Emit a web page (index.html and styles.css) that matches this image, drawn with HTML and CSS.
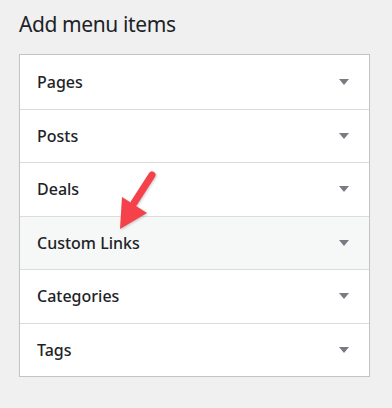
FILE: index.html
```html
<!doctype html>
<html lang="en">
<head>
  <meta charset="utf-8">
  <title>Add menu items</title>
  <meta name="viewport" content="width=device-width, initial-scale=1">
  <link rel="stylesheet" href="styles.css">
</head>
<body>
  <div id="menu-items">
    <h2 class="title">Add menu items</h2>
    <ul class="accordion">
      <li class="section"><span>Pages</span><i class="toggle"></i></li>
      <li class="section"><span>Posts</span><i class="toggle"></i></li>
      <li class="section"><span>Deals</span><i class="toggle"></i></li>
      <li class="section section-hover"><span>Custom Links</span><i class="toggle"></i></li>
      <li class="section"><span>Categories</span><i class="toggle"></i></li>
      <li class="section"><span>Tags</span><i class="toggle"></i></li>
    </ul>
    <svg class="pointer" width="60" height="70" viewBox="0 0 60 70">
      <line x1="52" y1="15" x2="34" y2="43" stroke="#f5424a" stroke-width="7" stroke-linecap="round"/>
      <polygon points="20,69 22,37 47,53" fill="#f5424a"/>
    </svg>
  </div>
</body>
</html>
```

FILE: styles.css
```css
html,
body {
  background: #f0f0f0;
  margin: 0;
  padding: 0;
  font-family: "Noto Sans", "Open Sans", sans-serif;
  color: #1d2327;
}

#menu-items {
  position: relative;
  padding: 11px 22px 0 19px;
}

.title {
  margin: 0 0 16px;
  font-size: 21px;
  font-weight: 400;
  letter-spacing: -0.4px;
  line-height: 27px;
}

.accordion {
  list-style: none;
  margin: 0;
  padding: 0;
  background: #fff;
  border: 1px solid #c3c4c7;
  box-shadow: 0 1px 1px rgba(0, 0, 0, 0.06);
}

.section {
  box-sizing: border-box;
  display: flex;
  align-items: center;
  justify-content: space-between;
  height: 53.5px;
  padding: 0 20px 0 17px;
  border-top: 1px solid #dcdcde;
  font-size: 16px;
  font-weight: 500;
}

.section:first-child {
  border-top: none;
}

.section-hover {
  background: #f6f7f7;
}

.toggle {
  width: 0;
  height: 0;
  border-left: 5px solid transparent;
  border-right: 5px solid transparent;
  border-top: 6px solid #787c82;
}

.pointer {
  position: absolute;
  left: 100px;
  top: 160px;
  filter: drop-shadow(1px 1px 1px rgba(0, 0, 0, 0.2));
}
```
